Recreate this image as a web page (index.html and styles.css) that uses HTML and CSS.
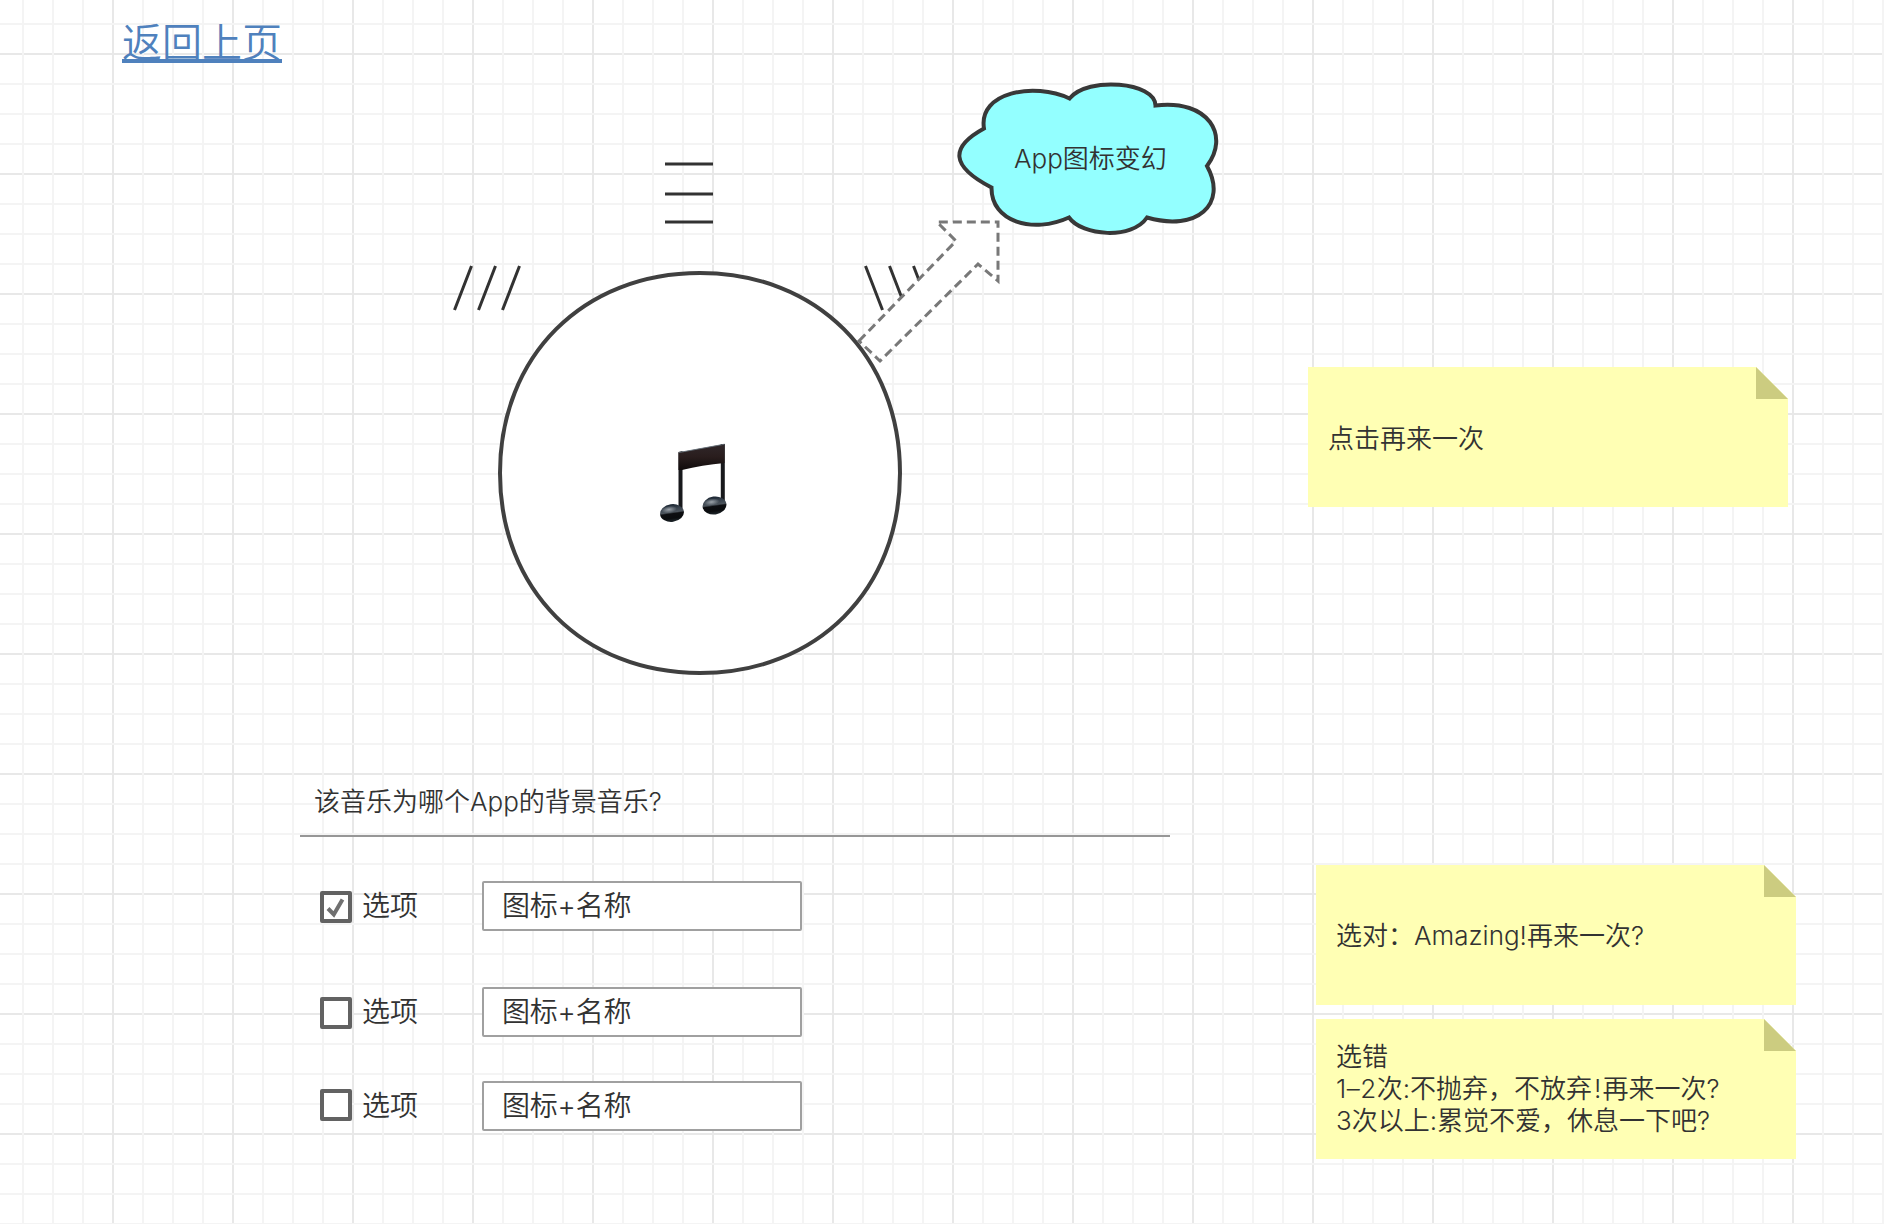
FILE: index.html
```html
<!DOCTYPE html>
<html lang="zh-CN">
<head>
<meta charset="utf-8">
<title>App图标变幻</title>
<link rel="stylesheet" href="styles.css">
</head>
<body>
<main class="canvas">
  <a class="back" href="#">返回上页</a>

  <svg class="art" viewBox="0 0 1884 780" aria-hidden="true">
    <defs>
      <linearGradient id="beam" x1="0" y1="0" x2="0" y2="1">
        <stop offset="0" stop-color="#30272a"/><stop offset=".5" stop-color="#291d1d"/><stop offset="1" stop-color="#100b0b"/>
      </linearGradient>
      <linearGradient id="head" x1="0" y1="0" x2="0" y2="1">
        <stop offset="0" stop-color="#1a2531"/><stop offset=".25" stop-color="#39434e"/><stop offset=".46" stop-color="#4c545c"/><stop offset=".54" stop-color="#0d0e11"/><stop offset=".8" stop-color="#0a0c0e"/><stop offset="1" stop-color="#20282d"/>
      </linearGradient>
      <radialGradient id="shine">
        <stop offset="0" stop-color="#b4bac0" stop-opacity=".8"/><stop offset="1" stop-color="#b4bac0" stop-opacity="0"/>
      </radialGradient>
    </defs>
    <g class="rays">
      <path d="M665 164h48M665 194h48M665 222h48"/>
      <path d="M471.500 266L454.500 310M495.500 266L478.500 310M519.500 266L502.500 310"/>
      <path d="M865.500 266L882.500 310M889.500 266L906.500 310M913.500 266L930.500 310"/>
    </g>
    <path class="disc" d="M500 473C500 356 583 273 700 273S900 356 900 473S817 673 700 673S500 590 500 473Z"/>
    <path class="arrow" d="M859 341L956 241L937 222H998V281L978 264L880 361Z"/>
    <path class="cloud" d="M984 128.500C978 92 1034 82 1069.500 98.500C1088 76 1155 82 1155.500 105.500C1209 99 1230 136 1207 166C1228 204 1197 232 1147 217.500C1132 240 1082 236 1069 217.500C1033 234 991 222 991.500 187.500C950 166 950 147 984 128.500Z"/>
    <g>
      <path d="M678.500 452L682.500 451V510L678.500 510ZM720.800 444L724.800 444V502L720.800 502Z" fill="#18191c"/>
      <ellipse cx="672" cy="513" rx="12" ry="8.800" fill="url(#head)" transform="rotate(-8 672 513)"/>
      <ellipse cx="669" cy="509.500" rx="8" ry="3.500" fill="url(#shine)" transform="rotate(-8 669 509.500)"/>
      <ellipse cx="714.500" cy="505.500" rx="12" ry="9" fill="url(#head)" transform="rotate(-8 714.500 505.500)"/>
      <ellipse cx="711.500" cy="502" rx="8" ry="3.500" fill="url(#shine)" transform="rotate(-8 711.500 502)"/>
      <path d="M678.500 452.500L724.500 444V463Q702 465 682 470L678.500 470Z" fill="url(#beam)"/>
      <path d="M679 452.500L724.500 444.200" fill="none" stroke="#657079" stroke-width=".9"/>
    </g>
  </svg>
  <div class="cloud-label">App图标变幻</div>

  <section class="quiz">
    <h1 class="question">该音乐为哪个App的背景音乐?</h1>
    <div class="option first">
      <span class="box"><svg viewBox="0 0 32 32"><path d="M8 17.500L13.800 23.500L22.500 8.500"/></svg></span>
      <span class="name">选项</span><div class="field">图标+名称</div>
    </div>
    <div class="option second"><span class="box"></span><span class="name">选项</span><div class="field">图标+名称</div></div>
    <div class="option third"><span class="box"></span><span class="name">选项</span><div class="field">图标+名称</div></div>
  </section>

  <aside class="sticky again">点击再来一次</aside>
  <aside class="sticky right">选对：Amazing!再来一次?</aside>
  <aside class="sticky wrong">选错<br><span class="range">1–2</span>次:不抛弃，不放弃<span class="bang">!</span>再来一次?<br>3次以上:累觉不爱，休息一下吧?</aside>
</main>
</body>
</html>
```
FILE: styles.css
```css
* { box-sizing: border-box; }
body { margin: 0; }

.canvas {
  position: relative;
  width: 1884px;
  height: 1224px;
  overflow: hidden;
  color: #323232;
  font-family: Inter, "Noto Sans CJK SC DemiLight", "Noto Sans CJK SC", sans-serif;
  font-weight: 350;
  background-color: #fff;
  background-image:
    linear-gradient(90deg, transparent 30px, #f4f4f4 30px 32px, transparent 32px 60px, #f4f4f4 60px 62px, transparent 62px 90px, #f4f4f4 90px 92px, transparent 92px),
    linear-gradient(transparent 30px, #f4f4f4 30px 32px, transparent 32px 60px, #f4f4f4 60px 62px, transparent 62px 90px, #f4f4f4 90px 92px, transparent 92px),
    linear-gradient(90deg, #e8e8e8 2px, transparent 2px),
    linear-gradient(#e8e8e8 2px, transparent 2px);
  background-size: 120px 120px;
  background-position: 112px 53px;
}

.back {
  position: absolute;
  left: 122px;
  top: 15px;
  font-size: 40px;
  line-height: 56px;
  color: #4f81bd;
  text-decoration: none;
}
.back::after {
  content: "";
  position: absolute;
  left: 0;
  right: 0;
  top: 44px;
  height: 4px;
  background: #4f81bd;
}

.art { position: absolute; left: 0; top: 0; width: 1884px; height: 780px; }
.rays { fill: none; stroke: #323232; stroke-width: 3; }
.disc { fill: #fff; stroke: #404040; stroke-width: 4; }
.arrow { fill: #fff; stroke: #787878; stroke-width: 3; stroke-dasharray: 9 5; }
.cloud { fill: #93ffff; stroke: #383838; stroke-width: 4; }

.cloud-label {
  position: absolute;
  left: 1014px;
  top: 141px;
  font-size: 26px;
  line-height: 36px;
  white-space: nowrap;
}

.quiz {
  position: absolute;
  left: 300px;
  top: 777px;
  width: 870px;
}
.question {
  margin: 0;
  height: 60px;
  padding-left: 14px;
  border-bottom: 2px solid #979797;
  font-size: 26px;
  font-weight: inherit;
  line-height: 50px;
}
.option { display: flex; align-items: flex-start; height: 50px; padding-left: 20px; font-size: 28px; }
.first { margin-top: 44px; }
.second { margin-top: 56px; }
.third { margin-top: 44px; }
.box { width: 32px; height: 32px; margin-top: 10px; border: 4px solid #626262; border-radius: 2px; background: #fff; }
.third .box { margin-top: 8px; }
.box svg { display: block; width: 32px; height: 32px; margin: -4px; fill: none; stroke: #707070; stroke-width: 4; }
.name { width: 119px; padding-left: 10px; line-height: 50px; }
.field {
  width: 320px;
  height: 50px;
  margin-left: 11px;
  padding-left: 18px;
  border: 2px solid #a0a0a0;
  border-radius: 2px;
  background: #fff;
  line-height: 47px;
  letter-spacing: -.2px;
}

.sticky {
  position: absolute;
  display: flow-root;
  width: 480px;
  height: 140px;
  padding: 0 20px;
  background: #ffffb4;
  clip-path: polygon(0 0, 448px 0, 100% 32px, 100% 100%, 0 100%);
  font-size: 26px;
  line-height: 32px;
  white-space: nowrap;
}
.sticky::after {
  content: "";
  position: absolute;
  right: 0;
  top: 0;
  width: 32px;
  height: 32px;
  background: #cccc80;
}
.again { left: 1308px; top: 367px; padding-top: 56px; }
.right { left: 1316px; top: 865px; padding-top: 55px; }
.wrong { left: 1316px; top: 1019px; padding-top: 22px; }
.range { letter-spacing: .5px; }
.bang { margin: 0 1px 0 2px; }
```
